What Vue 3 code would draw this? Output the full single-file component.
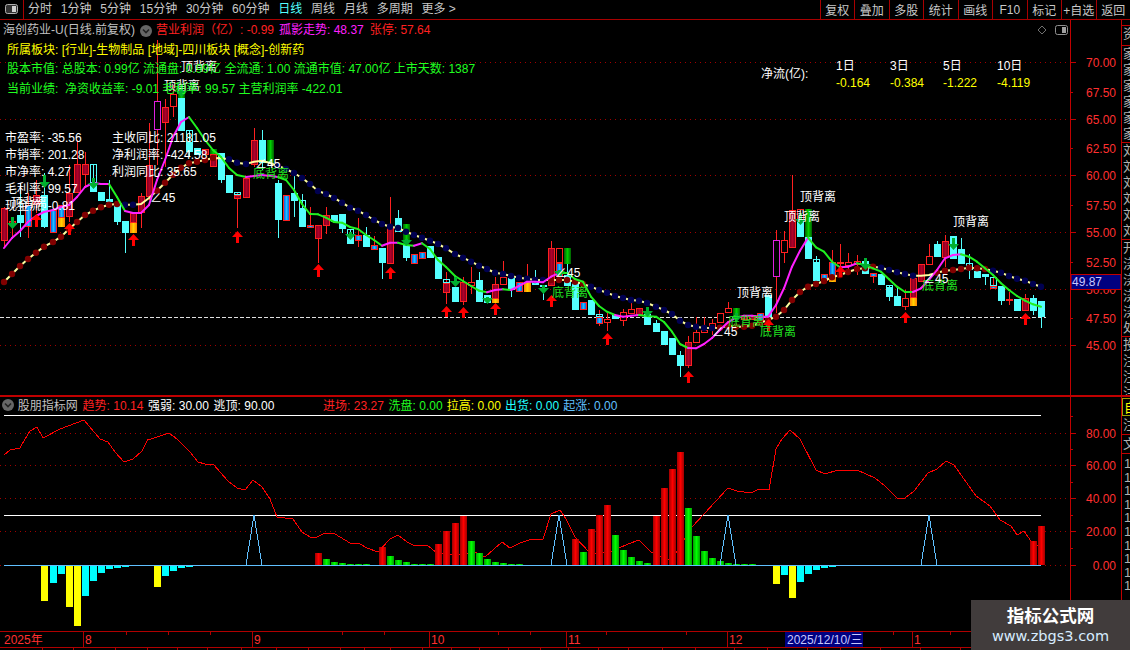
<script setup>
const X = (n) => Math.round(4.3 + 8.04 * n)
const candles = [
  [207,248,'R',208,241],[217,237,'R',221,224],[183,237,'c',215,223],[193,238,'b',205,227],[180,213,'R',195,205],
  [173,228,'c',195,227],[null,null,'b',210,233],[null,null,'b',205,218,'o',218,227],[165,222,'R',193,217],[140,193,'R',164,193],
  [152,187,'R',164,175],[null,null,'h',164,183,'c',183,192],[null,null,'c',192,201],[180,202,'c',199,202],[null,225,'c',205,222],
  [null,253,'c',221,233],[null,null,'R',213,223,'o',223,233],[193,228,'R',196,213],[123,200,'R',165,197],[40,165,'m',101,130],
  [99,167,'R',107,123],[85,117,'r',94,107],[null,null,'g',92,98,'c',98,131],[null,156,'h',130,143,'c',143,152],[null,null,'c',148,155],
  [null,null,'R',149,155],[null,null,'g',149,154,'R',154,167],[null,183,'c',153,180],[null,null,'c',175,193],[null,228,'h',192,195,'R',195,199],
  [null,null,'R',178,198],[128,167,'R',140,165],[130,170,'c',140,163],[null,null,'g',140,163],[180,238,'c',183,220],
  [null,null,'b',195,221],[173,217,'c',193,201],[194,null,'h',200,209,'c',209,227],[207,null,'b',225,228],[null,263,'R',225,239],
  [207,234,'R',215,226],[null,null,'c',215,222],[null,233,'c',214,229],[null,null,'h',229,237,'c',237,244],[218,247,'h',235,241,'b',235,241],
  [227,null,'c',235,247],[236,null,'b',245,250],[null,279,'c',248,263],[197,null,'R',228,264],[210,null,'c',218,232],
  [null,261,'g',224,240,'c',245,258],[null,null,'b',254,264],[null,null,'b',252,259],[null,null,'c',246,258],[null,null,'c',257,279],
  [272,304,'h',279,283,'R',283,293],[null,null,'c',287,302],[277,305,'R',282,302],[267,294,'r',282,286],[272,null,'c',280,302],
  [null,null,'c',295,303],[277,null,'R',284,299,'o',299,303],[261,null,'r',277,285],[null,297,'c',278,290],[null,null,'b',282,292],
  [264,null,'o',282,292],[270,null,'c',279,285],[null,300,'c',285,287],[241,null,'R',248,286],[null,null,'r',248,263,'b',263,277],
  [null,null,'g',248,264,'c',275,286],[null,null,'c',282,310],[null,null,'b',302,310],[null,null,'c',300,315],[310,326,'h',314,317,'b',317,324],
  [313,331,'r',319,323],[null,null,'c',315,319],[309,326,'r',312,321],[303,null,'r',309,314],[null,null,'R',308,315],
  [null,null,'c',314,325],[320,null,'c',323,332],[null,null,'c',331,345],[null,null,'c',338,355],[351,377,'c',355,366],
  [336,368,'R',342,366],[317,null,'r',332,343],[317,null,'r',330,333],[319,335,'r',323,328],[null,null,'r',313,323],
  [302,null,'r',308,313],[null,null,'g',308,317],[null,null,'R',316,320],[null,null,'R',315,320],[null,null,'b',313,321],
  [null,null,'c',295,317],[230,313,'m',240,277],[231,263,'r',240,253],[175,null,'R',210,248],[null,null,'r',209,222,'c',222,237],
  [null,null,'g',209,237,'c',237,259],[256,null,'h',259,263,'c',263,281],[null,null,'b',274,281],[250,null,'b',262,277,'o',277,282],[244,277,'r',262,264],
  [253,275,'r',262,266],[255,275,'r',261,265],[null,null,'c',261,274],[null,283,'b',273,277],[null,null,'c',274,285],
  [null,301,'h',285,288,'c',288,297],[288,null,'c',296,306],[290,310,'r',298,307],[null,null,'R',278,298,'o',298,306],[null,null,'R',264,282],
  [244,null,'r',256,265],[241,null,'c',244,257],[235,267,'R',241,258],[null,null,'c',236,259],[238,null,'c',249,264],
  [254,279,'h',263,270],[null,null,'c',271,278],[null,285,'c',274,277],[null,null,'h',277,286,'b',286,289],[null,305,'c',286,301],
  [292,305,'r',299,301],[null,null,'c',299,311],[294,null,'R',298,311],[295,315,'c',298,311],[null,328,'c',301,317],
]
const redTypes = 'rRbom'
const fills = { c: '#54ffff', h: 'none', r: '#000', R: 'url(#gCrimson)', b: 'url(#gBlue)', o: 'url(#gOrange)', m: '#000', g: 'url(#gGreen)' }
const strokes = { h: '#54ffff', r: '#ff2020', R: '#ff2020', b: '#ff2020', o: 'none', m: '#e020e0', c: 'none', g: 'none' }
const wicks = []
const bodies = []
candles.forEach((c, n) => {
  const cx = X(n)
  const segs = []
  for (let i = 2; i < c.length; i += 3) segs.push({ t: c[i], y1: c[i + 1], y2: c[i + 2] })
  const top = c[0] ?? segs[0].y1
  const bot = c[1] ?? segs[segs.length - 1].y2
  const red = segs.some((s) => redTypes.includes(s.t))
  wicks.push({ k: n, x: cx + 0.5, y1: top, y2: bot, c: red ? '#ff2020' : '#54ffff' })
  segs.forEach((s, i) => {
    const st = strokes[s.t]
    bodies.push(st === 'none'
      ? { k: n + '-' + i, x: cx - 3, y: s.y1, w: 7, h: s.y2 - s.y1, f: fills[s.t], s: 'none' }
      : { k: n + '-' + i, x: cx - 2.5, y: s.y1 + 0.5, w: 6, h: Math.max(1, s.y2 - s.y1 - 1), f: fills[s.t], s: st })
  })
})

const maY = [248,238,231,222,216,212,210,207,205,197,187,183,184,184,197,211,213,213,205,180,160,137,122,117,128,140,150,157,168,175,177,176,175,176,177,180,190,204,214,214.3,217.7,222,222.7,227,229,235,240,245.7,242.7,242.7,245,245.7,243.3,249,260,267,276,281,286,290.7,292.3,290,289.3,290,286,281.7,281.7,282.3,276.7,273,273,279,281.7,296.7,306,311.7,315,316.7,315.7,315,316,316.7,322,331.7,344,348,348.3,344,338,330,322.3,317.7,315.7,315.7,316.7,316.7,305,288.3,266.7,250.7,237.7,247.3,251.7,261.7,267.3,266.7,263.3,265,268.3,271.7,279.3,286.7,292,292,288.3,280,270,258.3,255,254.3,256.7,261.7,268.3,275,283.3,290,296,300.7,304.3,306.7]
const magRanges = [[0,13],[16,23],[31,34],[48,49],[52,52],[61,62],[64,69],[77,79],[86,100],[105,106],[114,119]]
const maSegs = maY.slice(1).map((y, i) => {
  const n = i + 1
  const mag = magRanges.some(([a, b]) => n >= a && n <= b)
  return { k: n, x1: X(n - 1), y1: maY[n - 1], x2: X(n), y2: y, c: mag ? '#ff20ff' : '#20f020' }
})

const cloudY = [282,274,266,259,252.7,246.7,242,236.7,229,222,215,210.7,207.3,204.7,204,204.7,204.7,204,198,190.7,182.7,174.7,167.7,163.3,161.7,160,158,158.3,159.3,162.7,164,161.7,160.7,163,166,169,173,178,184,191,194,198,202.7,207.7,210.7,215,220,224,226.7,228,231.7,235,237.7,240.7,244,248.3,254,257.7,261.7,265.7,269,272.7,274,276,277.7,278.7,280,280,280,280,280,281.7,284,286.7,290,292.7,296,298,300,300.7,303,306.7,310,314,320.7,325,326.7,328,328,327.7,325.7,326.7,326.7,325.7,323,320,316.7,310,300,292,286.7,284,281,277.3,275,272,269,268.3,266.7,267.7,270,272.3,274,275.7,275.7,275,272.7,270.7,270,269,267.7,268.3,269,270.7,272.7,276,278.7,280.7,284,286.7]
const cloudLine = cloudY.map((y, n) => X(n) + ',' + y).join(' ')
const cloudColor = (n) => {
  if (n <= 14) return '#800000'
  if (n <= 16) return '#000050'
  if (n <= 18) return null
  if (n <= 26) return '#800000'
  if (n === 27) return null
  if (n <= 30) return '#000050'
  if (n <= 33) return null
  if (n <= 67) return '#000050'
  if (n <= 72) return '#800000'
  if (n <= 88) return '#000050'
  if (n <= 108) return '#800000'
  if (n <= 113) return '#000050'
  if (n <= 115) return null
  if (n <= 122) return '#800000'
  return '#000050'
}
const dots = cloudY.map((y, n) => ({ k: n, x: X(n), y, c: cloudColor(n) })).filter((d) => d.c)

const upArrow = ([n, t, b]) => {
  const x = X(n) + 0.5
  return `${x - 5.5},${t + 6} ${x},${t} ${x + 5.5},${t + 6} ${x + 1.5},${t + 6} ${x + 1.5},${b} ${x - 1.5},${b} ${x - 1.5},${t + 6}`
}
const downArrow = ([n, t, b]) => {
  const x = X(n) + 0.5
  return `${x - 1.5},${t} ${x + 1.5},${t} ${x + 1.5},${b - 6} ${x + 5.5},${b - 6} ${x},${b} ${x - 5.5},${b - 6} ${x - 1.5},${b - 6}`
}
const redArrows = [[4,214,227],[8,223,235],[16,234,246],[29,231,243],[39,264,277],[48,267,279],[55,306,317],[57,307,318],[61,303,315],[68,295,307],[75,333,345],[85,371,383],[95,319,331],[104,266,277],[112,312,323],[127,313,325]].map(upArrow)
const greenArrows = [[1,217,229],[5,175,188],[11,178,189],[22,85,97],[43,232,240],[50,239,246],[56,277,287],[60,297,304],[67,285,294],[69,270,277],[80,307,317],[91,313,322],[99,213,225],[107,258,270],[118,238,250]].map(downArrow)

const topLabels = [[164,90],[181,71],[11,207],[800,201],[784,221],[737,297],[953,226]]
const botLabels = [[253,178],[552,297],[728,326],[760,336],[922,290]]
const angleLabels = [[150,202],[255,168],[555,277],[712,336],[923,283]]

const gridUpper = [62,119,175,232,289,345]
const priceLabels = [[70,62],[67.5,92],[65,119],[62.5,148],[60,175],[57.5,205],[55,232],[52.5,262],[50,289],[47.5,318],[45,345]]
const gridLower = [434,466,499,532,566]
const lowLabels = [[80,434],[60,466],[40,499],[20,532],[0,566]]
const lowMinor = [417,450,483,516,549]

const lowerLine = '4,456 10,451 20,449 25,440 30,432 37,428 43,439 60,430 84,421 100,440 108,443 115,453 124,463 133,460 142,452 148,440 151,440 169,434 177,440 190,453 198,463 205,465 213,465 228,482 237,489 245,491 253,481 262,488 270,500 277,518 293,520 302,533 310,538 317,538 325,534 335,535 350,544 360,545 367,549 378,553 390,540 398,536 407,543 413,546 427,546 437,554 457,556 475,553 485,558 502,543 510,549 520,544 532,540 543,540 551,515 560,511 566,520 575,538 591,555 610,553 628,545 639,541 651,553 671,562 692,528 728,489 737,492 751,494 759,490 769,491 776,450 782,440 790,431 800,440 816,471 825,475 838,471 857,471 875,479 885,487 897,499 905,499 914,492 928,474 937,470 946,462 954,466 976,497 990,507 1000,521 1011,527 1017,536 1024,532 1033,545 1040,548'
const triangles = [31, 69, 90, 115].map((n) => `${X(n) - 8},566 ${X(n)},516 ${X(n) + 8},566`)
const red = 'url(#gRed)'
const green = 'url(#gGreenBar)'
const cy = '#00ffff'
const ye = '#ffff00'
const barSpec = [
  [5,602,ye],[6,584,cy],[7,575,cy],[8,608,ye],[9,627,ye],[10,597,cy],[11,582,cy],[12,574,cy],[13,570,cy],[14,569,cy],[15,568,cy],
  [19,588,ye],[20,577,cy],[21,572,cy],[22,569,cy],[23,568,cy],
  [39,554,red],[40,560,green],[41,563,green],[42,564,green],[43,565,green],[44,565,green],[45,565,green],
  [47,548,red],[48,557,green],[49,561,green],[50,563,green],[51,565,green],[52,565,green],[53,565,green],
  [54,545,red],[55,532,red],[56,524,red],[57,517,red],[58,542,green],[59,554,green],[60,560,green],[61,563,green],[62,564,green],[63,565,green],[64,565,green],
  [71,540,red],[72,553,green],[73,530,red],[74,516,red],[75,506,red],[76,536,green],[77,551,green],[78,558,green],[79,562,green],[80,564,green],
  [81,517,red],[82,489,red],[83,470,red],[84,453,red],[85,509,green],[86,537,green],[87,552,green],[88,559,green],[89,562,green],[90,564,green],[91,565,green],[92,565,green],[93,565,green],
  [96,585,ye],[97,576,cy],[98,599,ye],[99,583,cy],[100,575,cy],[101,571,cy],[102,569,cy],[103,568,cy],
  [128,542,red],[129,527,red],
]
const bars = barSpec.map(([n, v, c]) => ({
  k: n, x: X(n) - 3, w: 7, y: Math.min(v, 566), h: Math.abs(v - 566), c,
}))

const navLeft = ['分时','1分钟','5分钟','15分钟','30分钟','60分钟','日线','周线','月线','多周期','更多 >']
const navRight = ['复权','叠加','多股','统计','画线','F10','标记','+自选','返回']
const timeSeps = [83,252,429,566,727,912]
const timeTicks = [126,168,210,342,384,498,530,606,686,893,950]
const timeText = [['2025年',4],['8',85],['9',254],['10',431],['11',568],['12',729],['1',914]]
const tabSeps = [42,73,115,147,177,207,241,276,308,340,364,390,422,451,479,508,540,568,598,628,662,695,734,767,807,840,880,920,960,1000]
const stripA = ['资']
const stripB = ['家','家','家','家','家','家']
const stripC = ['刘','刘','刘','刘','刘','刘']
const stripD = ['开','浇','浇','浇','浇','处']
const stripE = ['投','注','注','注','日']
const ones = ['1','1','1','1','1','1','1','1','1','1']
</script>

<template>
  <div class="screen">
    <header class="toolbar">
      <div class="menu-btn">
        <svg width="14" height="11" viewBox="0 0 14 11" class="block">
          <rect x="0.5" y="0.5" width="12" height="9" rx="2" fill="#333" stroke="#b0b0b0" />
          <rect x="7" y="2" width="4" height="6" fill="#d0d0d0" />
        </svg>
      </div>
      <nav class="nav-left">
        <span v-for="t in navLeft" :key="t" :class="{ on: t === '日线' }">{{ t }}</span>
      </nav>
      <nav class="nav-right">
        <span v-for="t in navRight" :key="t">{{ t }}</span>
      </nav>
    </header>

    <section class="pane upper">
      <div class="plot">
        <svg class="block" width="1070" height="375" viewBox="0 20 1070 375">
          <defs>
            <linearGradient id="gCrimson"><stop offset="0" stop-color="#7a0022" /><stop offset="0.5" stop-color="#b00028" /><stop offset="1" stop-color="#7a0022" /></linearGradient>
            <linearGradient id="gBlue"><stop offset="0" stop-color="#0050e0" /><stop offset="0.5" stop-color="#20c0ff" /><stop offset="1" stop-color="#0050e0" /></linearGradient>
            <linearGradient id="gOrange"><stop offset="0" stop-color="#ff8000" /><stop offset="0.5" stop-color="#ffd000" /><stop offset="1" stop-color="#ff8000" /></linearGradient>
            <linearGradient id="gGreen"><stop offset="0" stop-color="#006000" /><stop offset="0.5" stop-color="#00d000" /><stop offset="1" stop-color="#006000" /></linearGradient>
            <linearGradient id="gRed"><stop offset="0" stop-color="#a00000" /><stop offset="0.5" stop-color="#ff0000" /><stop offset="1" stop-color="#a00000" /></linearGradient>
            <linearGradient id="gGreenBar"><stop offset="0" stop-color="#00a000" /><stop offset="0.5" stop-color="#00ff00" /><stop offset="1" stop-color="#00a000" /></linearGradient>
          </defs>
          <line v-for="y in gridUpper" :key="y" class="dotted" x1="0" x2="1070" :y1="y + 0.5" :y2="y + 0.5" />
          <g shape-rendering="crispEdges">
            <line x1="0" x2="1046" y1="317.5" y2="317.5" class="dashed" />
            <line v-for="w in wicks" :key="w.k" :x1="w.x" :x2="w.x" :y1="w.y1" :y2="w.y2" :stroke="w.c" />
            <rect v-for="b in bodies" :key="b.k" :x="b.x" :y="b.y" :width="b.w" :height="b.h" :fill="b.f" :stroke="b.s" />
          </g>
          <polyline :points="cloudLine" class="cloud" />
          <circle v-for="d in dots" :key="d.k" :cx="d.x" :cy="d.y" r="3.2" :fill="d.c" />
          <line v-for="s in maSegs" :key="s.k" :x1="s.x1" :y1="s.y1" :x2="s.x2" :y2="s.y2" :stroke="s.c" class="ma" />
          <polygon v-for="p in redArrows" :key="p" :points="p" fill="#ff0000" />
          <polygon v-for="p in greenArrows" :key="p" :points="p" fill="#00b030" />
          <text v-for="t in topLabels" :key="t[0]" class="lbl white" :x="t[0]" :y="t[1]">顶背离</text>
          <text v-for="t in botLabels" :key="t[0]" class="lbl lime" :x="t[0]" :y="t[1]">底背离</text>
          <text v-for="t in angleLabels" :key="t[0]" class="lbl white" :x="t[0]" :y="t[1]">∠45</text>
          <polygon points="1042,26 1046,30 1042,34 1038,30" fill="none" stroke="#707070" />
          <rect x="1055.5" y="25.5" width="12" height="9" rx="2" fill="none" stroke="#909090" />
          <rect x="1062" y="27" width="4" height="6" fill="#a0a0a0" />
        </svg>

        <div class="info">
          <div class="info-line first">
            <span class="gray">海创药业-U(日线.前复权)</span>
            <svg class="chev" width="12" height="12" viewBox="0 0 12 12">
              <circle cx="6" cy="6" r="6" fill="#666" />
              <path d="M3 4.5 L6 7.5 L9 4.5" fill="none" stroke="#222" stroke-width="1.6" />
            </svg>
            <span class="red">营业利润（亿）: -0.99</span>
            <span class="mag gap-a">孤影走势: 48.37</span>
            <span class="red gap-b">张停: 57.64</span>
          </div>
          <div class="info-line yellow">所属板块: [行业]-生物制品 [地域]-四川板块 [概念]-创新药</div>
          <div class="info-line lime">股本市值: 总股本: 0.99亿 流通盘: 0.99亿 全流通: 1.00 流通市值: 47.00亿 上市天数: 1387</div>
          <div class="info-line lime">当前业绩: &nbsp;净资收益率: -9.01 毛利率: 99.57 主营利润率 -422.01</div>
        </div>

        <div class="stats">
          <span>市盈率: -35.56</span><span>主收同比: 21181.05</span>
          <span>市销率: 201.28</span><span>净利润率: -424.58</span>
          <span>市净率: 4.27</span><span>利润同比: 35.65</span>
          <span>毛利率: 99.57</span><span></span>
          <span>现金流: -0.81</span><span></span>
        </div>

        <div class="flow">
          <span class="flow-title">净流(亿):</span>
          <span>1日</span><span>3日</span><span>5日</span><span>10日</span>
          <b>-0.164</b><b>-0.384</b><b>-1.222</b><b>-4.119</b>
        </div>
      </div>

      <svg class="block axis" width="50" height="375" viewBox="1071 20 50 375">
        <g v-for="p in priceLabels" :key="p[0]">
          <line x1="1071" :x2="Number.isInteger(p[0] / 5) ? 1076 : 1073" :y1="p[1] + 0.5" :y2="p[1] + 0.5" class="tick" />
          <text class="ax" x="1116" :y="p[1] + 4.5" text-anchor="end">{{ p[0].toFixed(2) }}</text>
        </g>
        <rect x="1071" y="274.5" width="50" height="15" fill="#000080" stroke="#c00000" />
        <text class="cur" x="1072" y="286">49.87</text>
      </svg>

      <div class="strip">
        <div class="strip-gap"></div>
        <div class="strip-sec h20"><span v-for="(c, i) in stripA" :key="i">{{ c }}</span></div>
        <div class="strip-sec h97"><span v-for="(c, i) in stripB" :key="i">{{ c }}</span></div>
        <div class="strip-sec h97"><span v-for="(c, i) in stripC" :key="i">{{ c }}</span></div>
        <div class="strip-sec h97"><span v-for="(c, i) in stripD" :key="i">{{ c }}</span></div>
        <div class="strip-sec"><span v-for="(c, i) in stripE" :key="i">{{ c }}</span></div>
      </div>
    </section>

    <section class="pane lower">
      <div class="plot">
        <svg class="block" width="1070" height="232" viewBox="0 398 1070 232">
          <line v-for="y in gridLower" :key="y" class="dotted" x1="0" x2="1070" :y1="y + 0.5" :y2="y + 0.5" />
          <g shape-rendering="crispEdges">
            <line x1="4" x2="1041" y1="416.5" y2="416.5" class="whiteline" />
            <line x1="4" x2="1041" y1="516.5" y2="516.5" class="whiteline" />
            <polyline :points="lowerLine" class="redline" />
            <rect v-for="b in bars" :key="b.k" :x="b.x" :y="b.y" :width="b.w" :height="b.h" :fill="b.c" />
            <polyline v-for="t in triangles" :key="t" :points="t" class="tri" />
            <line x1="4" x2="1041" y1="566.5" y2="566.5" class="zero" />
          </g>
        </svg>
        <div class="sub">
          <svg class="chev2" width="12" height="12" viewBox="0 0 12 12">
            <circle cx="6" cy="6" r="6" fill="#666" />
            <path d="M3 4.5 L6 7.5 L9 4.5" fill="none" stroke="#222" stroke-width="1.6" />
          </svg>
          <span class="gray sub-name">股朋指标网</span>
          <span class="red">趋势: 10.14</span>
          <span class="white">强弱: 30.00</span>
          <span class="white">逃顶: 90.00</span>
          <span class="red sub-b">进场: 23.27</span>
          <span class="lime">洗盘: 0.00</span>
          <span class="yellow sub-c">拉高: 0.00</span>
          <span class="cyan sub-c">出货: 0.00</span>
          <span class="sky sub-c">起涨: 0.00</span>
        </div>
      </div>
      <svg class="block axis" width="50" height="232" viewBox="1071 398 50 232">
        <g v-for="p in lowLabels" :key="p[0]">
          <line x1="1071" x2="1076" :y1="p[1] + 0.5" :y2="p[1] + 0.5" class="tick" />
          <text class="ax" x="1116" :y="p[1] + 4.5" text-anchor="end">{{ p[0].toFixed(2) }}</text>
        </g>
        <line v-for="y in lowMinor" :key="y" x1="1071" x2="1073" :y1="y + 0.5" :y2="y + 0.5" class="tick" />
      </svg>
      <div class="strip">
        <div class="cell-y">自</div>
        <div class="cell-g">注</div>
        <div class="cell-g">文</div>
        <div class="ones"><span v-for="(c, i) in ones" :key="i">{{ c }}</span></div>
      </div>
    </section>

    <svg class="block" width="1130" height="20" viewBox="0 630 1130 20">
      <line x1="0" x2="1130" y1="630.5" y2="630.5" class="axline" />
      <line x1="0" x2="1130" y1="646.5" y2="646.5" class="axline" />
      <line v-for="x in timeSeps" :key="x" :x1="x + 0.5" :x2="x + 0.5" y1="631" y2="646" class="axline" />
      <line v-for="x in timeTicks" :key="x" :x1="x + 0.5" :x2="x + 0.5" y1="631" y2="634" class="axline" />
      <line v-for="x in tabSeps" :key="x" :x1="x + 0.5" :x2="x + 0.5" y1="647" y2="650" class="axline" />
      <rect x="785" y="631" width="78" height="15" fill="#000080" />
      <text v-for="t in timeText" :key="t[1]" class="ax" :x="t[1]" y="643">{{ t[0] }}</text>
      <text class="cur" x="787" y="643">2025/12/10/三</text>
    </svg>

    <div class="mark">
      <div class="mark-cn">指标公式网</div>
      <div class="mark-en">www.zbgs3.com</div>
    </div>
  </div>
</template>

<style scoped>
.screen {
  position: relative;
  width: 1130px;
  height: 650px;
  overflow: hidden;
  background: #000;
  color: #c8c8c8;
  font: 12px "Liberation Sans", "Noto Sans CJK SC", sans-serif;
}
.block { display: block; }

.toolbar {
  display: flex;
  align-items: stretch;
  height: 19px;
  border-bottom: 1px solid #a80000;
}
.menu-btn {
  display: flex;
  align-items: center;
  justify-content: center;
  width: 23px;
  border-right: 1px solid #a80000;
}
.nav-left {
  display: flex;
  align-items: center;
  gap: 8.8px;
  padding-left: 4px;
  flex: 1;
  line-height: 19px;
}
.nav-left .on { color: #54ffff; }
.nav-right { display: flex; }
.nav-right span {
  display: flex;
  align-items: center;
  justify-content: center;
  width: 34.5px;
  border-left: 1px solid #a80000;
  box-sizing: border-box;
}

.pane { display: flex; }
.upper { height: 375px; }
.lower {
  height: 234px;
  border-top: 2px solid #c00000;
}
.plot { position: relative; width: 1070px; flex: none; overflow: hidden; }
.axis { border-left: 1px solid #c00000; flex: none; }
.strip {
  flex: none;
  width: 9px;
  border-left: 1px solid #c00000;
  overflow: hidden;
  white-space: nowrap;
  color: #b0b0b0;
  font-size: 13px;
}
.strip-gap { height: 5px; border-bottom: 1px solid #c00000; }
.strip-sec {
  display: flex;
  flex-direction: column;
  border-bottom: 1px solid #c00000;
  line-height: 16px;
  padding-left: 1px;
}
.h20 { height: 19px; }
.h97 { height: 96px; }
.cell-y {
  height: 18px;
  line-height: 18px;
  padding-left: 1px;
  color: #ffff00;
  border: 1px solid #a0a000;
  border-right: 0;
  box-sizing: border-box;
  margin-top: 1px;
}
.cell-g {
  height: 18px;
  line-height: 18px;
  padding-left: 1px;
  border-bottom: 1px solid #c00000;
  box-sizing: content-box;
}
.ones {
  display: flex;
  flex-direction: column;
  padding: 3px 0 0 2px;
  line-height: 13.6px;
}

.dotted { stroke: #a00000; stroke-dasharray: 1 4; }
.dashed { stroke: #e0e0e0; stroke-dasharray: 4 2; }
.cloud { fill: none; stroke: #ffffa0; stroke-width: 2; }
.ma { stroke-width: 2; stroke-linecap: round; }
.lbl { font: 12px "Liberation Sans", "Noto Sans CJK SC", sans-serif; }
text.white { fill: #fff; }
text.lime { fill: #20e020; }
.whiteline { stroke: #fff; stroke-width: 1.4; }
.redline { fill: none; stroke: #ff0000; }
.tri { fill: none; stroke: #60c0ff; }
.zero { stroke: #60c0ff; }
.tick { stroke: #c00000; }
.axline { stroke: #b00000; }
.ax { fill: #ff3030; font: 12px "Liberation Sans", "Noto Sans CJK SC", sans-serif; }
.cur { fill: #c8c8ff; font: 12px "Liberation Sans", "Noto Sans CJK SC", sans-serif; }

.info {
  position: absolute;
  left: 0;
  top: 1px;
  line-height: 19.7px;
  white-space: nowrap;
}
.info-line { padding-left: 7px; }
.info-line.first {
  display: flex;
  align-items: center;
  padding-left: 3px;
}
.chev { margin: 0 4px 0 5px; }
.gap-a { margin-left: 5px; }
.gap-b { margin-left: 6px; }
.gray { color: #c0c0c0; }
.red { color: #ff2020; }
.mag { color: #ff20ff; }
.yellow { color: #ffff00; }
.lime { color: #20ff20; }
.white { color: #fff; }
.cyan { color: #20ffff; }
.sky { color: #60c0ff; }

.stats {
  position: absolute;
  left: 5px;
  top: 110px;
  display: grid;
  grid-template-columns: 107px auto;
  grid-auto-rows: 17px;
  line-height: 17px;
  color: #fff;
  white-space: nowrap;
}
.flow {
  position: absolute;
  left: 761px;
  top: 38px;
  display: grid;
  grid-template-columns: 75px 54px 53px 54px 40px;
  grid-auto-rows: 17px;
  line-height: 17px;
  color: #fff;
  white-space: nowrap;
}
.flow b { font-weight: normal; color: #ffff00; }
.flow-title { grid-row: 1 / span 2; align-self: center; margin-top: -2px; }

.sub {
  position: absolute;
  left: 2px;
  top: 0;
  display: flex;
  align-items: center;
  gap: 4.8px;
  height: 15px;
  white-space: nowrap;
}
.chev2 { margin-right: -1px; }
.sub-b { margin-left: 44px; }
.sub-c { margin-left: -0.6px; }

.mark {
  position: absolute;
  right: 0;
  bottom: 0;
  width: 159px;
  height: 50px;
  background: #413c3c;
  text-align: center;
}
.mark-cn {
  margin-top: 4px;
  color: #fff;
  font-size: 17.5px;
  font-weight: 700;
  line-height: 24px;
}
.mark-en {
  margin-top: -1px;
  color: #d8ecff;
  font: 14.5px/18px "DejaVu Sans", sans-serif;
}
</style>
